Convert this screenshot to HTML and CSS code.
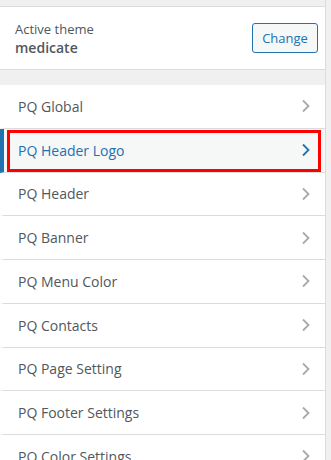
FILE: index.html
```html
<!DOCTYPE html>
<html lang="en">

<head>
  <meta charset="UTF-8" />
  <meta name="viewport" content="width=device-width, initial-scale=1.0" />
  <title>Customizer</title>
  <link rel="stylesheet" href="styles.css">
</head>

<body>
  <div class="sidebar">
    <div class="theme-info">
      <div class="theme-text">
        <span class="theme-label">Active theme</span>
        <span class="theme-name">medicate</span>
      </div>
      <button class="change-btn" type="button">Change</button>
    </div>

    <ul class="sections">
      <li class="section">PQ Global <svg class="chev" viewBox="0 0 10 14"><polyline points="2,1.5 7.5,7 2,12.5" /></svg></li>
      <li class="section active">PQ Header Logo <svg class="chev" viewBox="0 0 10 14"><polyline points="2,1.5 7.5,7 2,12.5" /></svg></li>
      <li class="section">PQ Header <svg class="chev" viewBox="0 0 10 14"><polyline points="2,1.5 7.5,7 2,12.5" /></svg></li>
      <li class="section">PQ Banner <svg class="chev" viewBox="0 0 10 14"><polyline points="2,1.5 7.5,7 2,12.5" /></svg></li>
      <li class="section">PQ Menu Color <svg class="chev" viewBox="0 0 10 14"><polyline points="2,1.5 7.5,7 2,12.5" /></svg></li>
      <li class="section">PQ Contacts <svg class="chev" viewBox="0 0 10 14"><polyline points="2,1.5 7.5,7 2,12.5" /></svg></li>
      <li class="section">PQ Page Setting <svg class="chev" viewBox="0 0 10 14"><polyline points="2,1.5 7.5,7 2,12.5" /></svg></li>
      <li class="section">PQ Footer Settings <svg class="chev" viewBox="0 0 10 14"><polyline points="2,1.5 7.5,7 2,12.5" /></svg></li>
      <li class="section">PQ Color Settings <svg class="chev" viewBox="0 0 10 14"><polyline points="2,1.5 7.5,7 2,12.5" /></svg></li>
    </ul>
  </div>
</body>

</html>
```

FILE: styles.css
```css
body {
  margin: 0;
  background: #f0f0f1;
  font-family: 'Open Sans', sans-serif;
  color: #50575e;
  overflow: hidden;
}
.sidebar {
  width: 325px;
  border-right: 1px solid #dcdcde;
  padding-top: 6px;
  min-height: 460px;
}
.theme-info {
  background: white;
  border-top: 1px solid #dcdcde;
  border-bottom: 1px solid #dcdcde;
  height: 62px;
  display: flex;
  align-items: center;
  justify-content: space-between;
  padding: 0 7px 0 15px;
}
.theme-text {
  display: flex;
  flex-direction: column;
}
.theme-label {
  font-size: 13px;
  line-height: 18px;
}
.theme-name {
  font-size: 14px;
  font-weight: 600;
  line-height: 19px;
}
.change-btn {
  font-family: inherit;
  font-size: 13px;
  color: #2271b1;
  background: #f6f7f7;
  border: 1px solid #2271b1;
  border-radius: 3px;
  width: 66px;
  height: 30px;
  padding: 0;
}
.sections {
  list-style: none;
  margin: 15px 0 0;
  padding: 0;
}
.section {
  background: white;
  border-bottom: 1px solid #dcdcde;
  border-left: 4px solid white;
  box-sizing: border-box;
  height: 43.75px;
  padding: 0 14px;
  font-size: 14px;
  display: flex;
  align-items: center;
  justify-content: space-between;
  position: relative;
}
.chev {
  width: 10px;
  height: 14px;
  fill: none;
  stroke: #a7aaad;
  stroke-width: 1.8;
}
.active {
  background: #f6f7f7;
  color: #2271b1;
  border-left-color: #2271b1;
}
.active .chev {
  stroke: #2271b1;
}
/* annotation box round the selected row */
.active::after {
  content: '';
  position: absolute;
  left: 3px;
  right: 4px;
  top: 1px;
  bottom: 0;
  border: 3px solid #f00;
}
```
